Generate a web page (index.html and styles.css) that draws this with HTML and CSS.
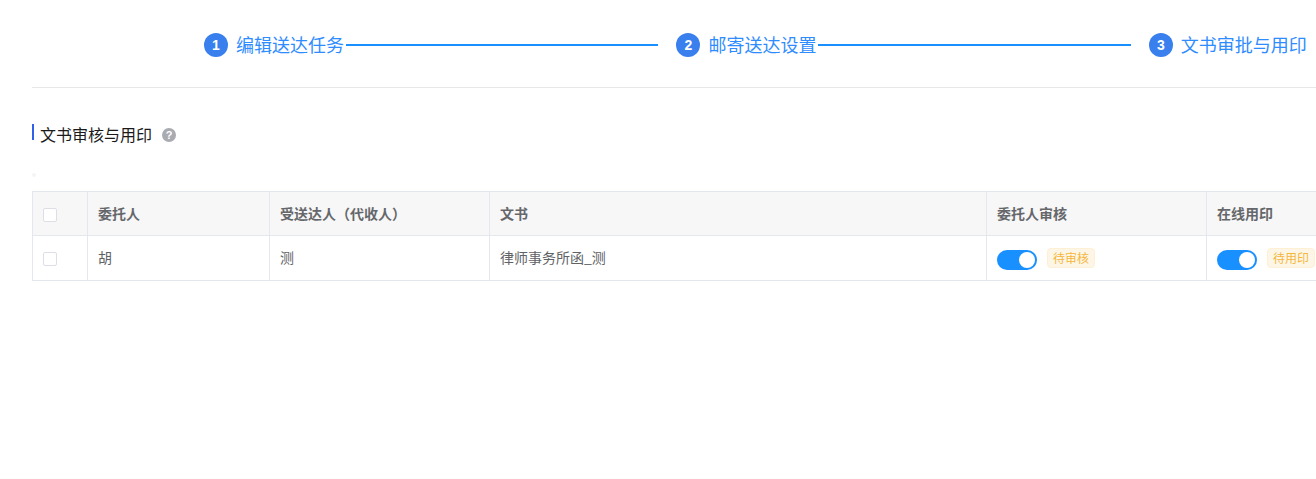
FILE: index.html
```html
<!DOCTYPE html>
<html lang="zh-CN">
<head>
  <meta charset="UTF-8" />
  <title>文书审核与用印</title>
  <link rel="stylesheet" href="styles.css">
</head>
<body>
  <div class="page">
    <div class="steps">
      <div class="step">
        <span class="step-num">1</span>
        <span class="step-text">编辑送达任务</span>
        <span class="step-line"></span>
      </div>
      <div class="step">
        <span class="step-num">2</span>
        <span class="step-text">邮寄送达设置</span>
        <span class="step-line"></span>
      </div>
      <div class="step step-last">
        <span class="step-num">3</span>
        <span class="step-text">文书审批与用印</span>
      </div>
    </div>

    <div class="section-title">
      <span class="title-text">文书审核与用印</span>
      <span class="help-icon">?</span>
    </div>

    <div class="dot"></div>

    <table class="doc-table">
      <colgroup>
        <col class="col-check">
        <col class="col-client">
        <col class="col-receiver">
        <col class="col-doc">
        <col class="col-review">
        <col class="col-seal">
      </colgroup>
      <thead>
        <tr>
          <th class="cell-check"><span class="checkbox"></span></th>
          <th>委托人</th>
          <th>受送达人（代收人）</th>
          <th>文书</th>
          <th>委托人审核</th>
          <th>在线用印</th>
        </tr>
      </thead>
      <tbody>
        <tr>
          <td class="cell-check"><span class="checkbox"></span></td>
          <td>胡</td>
          <td>测</td>
          <td>律师事务所函_测</td>
          <td>
            <div class="status">
              <span class="switch"></span>
              <span class="tag">待审核</span>
            </div>
          </td>
          <td>
            <div class="status">
              <span class="switch"></span>
              <span class="tag">待用印</span>
            </div>
          </td>
        </tr>
      </tbody>
    </table>
  </div>
</body>
</html>
```

FILE: styles.css
```css
html, body {
  margin: 0;
  height: 100%;
  background: #fff;
}

body {
  font-family: "Noto Sans CJK SC", "Liberation Sans", sans-serif;
  color: #606266;
}

/* the table is wider than the window, it gets cut at the right edge */
.page {
  width: 1284px;
  margin-left: 32px;
  overflow: hidden;
}

.steps {
  display: flex;
  height: 87px;
  padding-left: 172px;
  border-bottom: 1px solid #e8e8e8;
}

.step {
  flex: none;
  display: flex;
  align-items: center;
  width: 472.4px;
  height: 90px;
  box-sizing: border-box;
  padding-right: 18px;
}

.step-num {
  flex: none;
  width: 24px;
  height: 24px;
  border-radius: 50%;
  background: #3a7fee;
  color: #fff;
  font: bold 14px/24px "Liberation Sans", sans-serif;
  text-align: center;
}

.step-text {
  flex: none;
  margin-left: 8px;
  padding-bottom: 2px;
  font-size: 18px;
  line-height: 24px;
  color: #2f8cff;
}

.step-line {
  flex: 1;
  height: 2px;
  margin-left: 2px;
  background: #1890ff;
}

.section-title {
  display: flex;
  align-items: center;
  height: 16px;
  margin-top: 36px;
  padding-left: 6px;
  border-left: 2px solid #2f62e8;
}

.title-text {
  margin-top: 4px;
  font-size: 16px;
  line-height: 22px;
  color: #1a1a1a;
}

.help-icon {
  width: 14px;
  height: 14px;
  margin-top: 6px;
  margin-left: 10px;
  border-radius: 50%;
  background: #a9abb0;
  color: #fff;
  font: bold 11px/14px "Liberation Sans", sans-serif;
  text-align: center;
}

.dot {
  width: 4px;
  height: 4px;
  margin-top: 33px;
  border-radius: 50%;
  background: #f5f5f7;
}

.doc-table {
  width: 1400px;
  margin-top: 14px;
  border-collapse: collapse;
  table-layout: fixed;
  font-size: 14px;
}

.col-check { width: 55px; }
.col-client { width: 182px; }
.col-receiver { width: 220px; }
.col-doc { width: 497px; }
.col-review { width: 220px; }

.doc-table th,
.doc-table td {
  padding: 0 10px 2px;
  border: 1px solid #e4e7ed;
  text-align: left;
  white-space: nowrap;
}

.doc-table th {
  height: 41px;
  background: #f7f7f7;
  font-size: 14px;
  font-weight: bold;
  color: #65676b;
}

.doc-table td {
  height: 42px;
  color: #606266;
}

.doc-table .cell-check {
  padding: 2px 0 0 10px;
}

.checkbox {
  display: block;
  width: 12px;
  height: 12px;
  border: 1px solid #dcdfe6;
  border-radius: 2px;
  background: #fff;
}

.status {
  display: flex;
  align-items: center;
  gap: 10px;
  margin-top: 2px;
}

.switch {
  position: relative;
  flex: none;
  width: 40px;
  height: 20px;
  margin-top: 4px;
  border-radius: 10px;
  background: #1890ff;
}

.switch::after {
  content: "";
  position: absolute;
  top: 2px;
  right: 2px;
  width: 16px;
  height: 16px;
  border-radius: 50%;
  background: #fff;
}

.tag {
  flex: none;
  height: 18px;
  padding: 0 5px;
  border: 1px solid #fdf0d4;
  border-radius: 4px;
  background: #fdf6e7;
  color: #f5b63c;
  font-size: 12px;
  line-height: 18px;
}
```
